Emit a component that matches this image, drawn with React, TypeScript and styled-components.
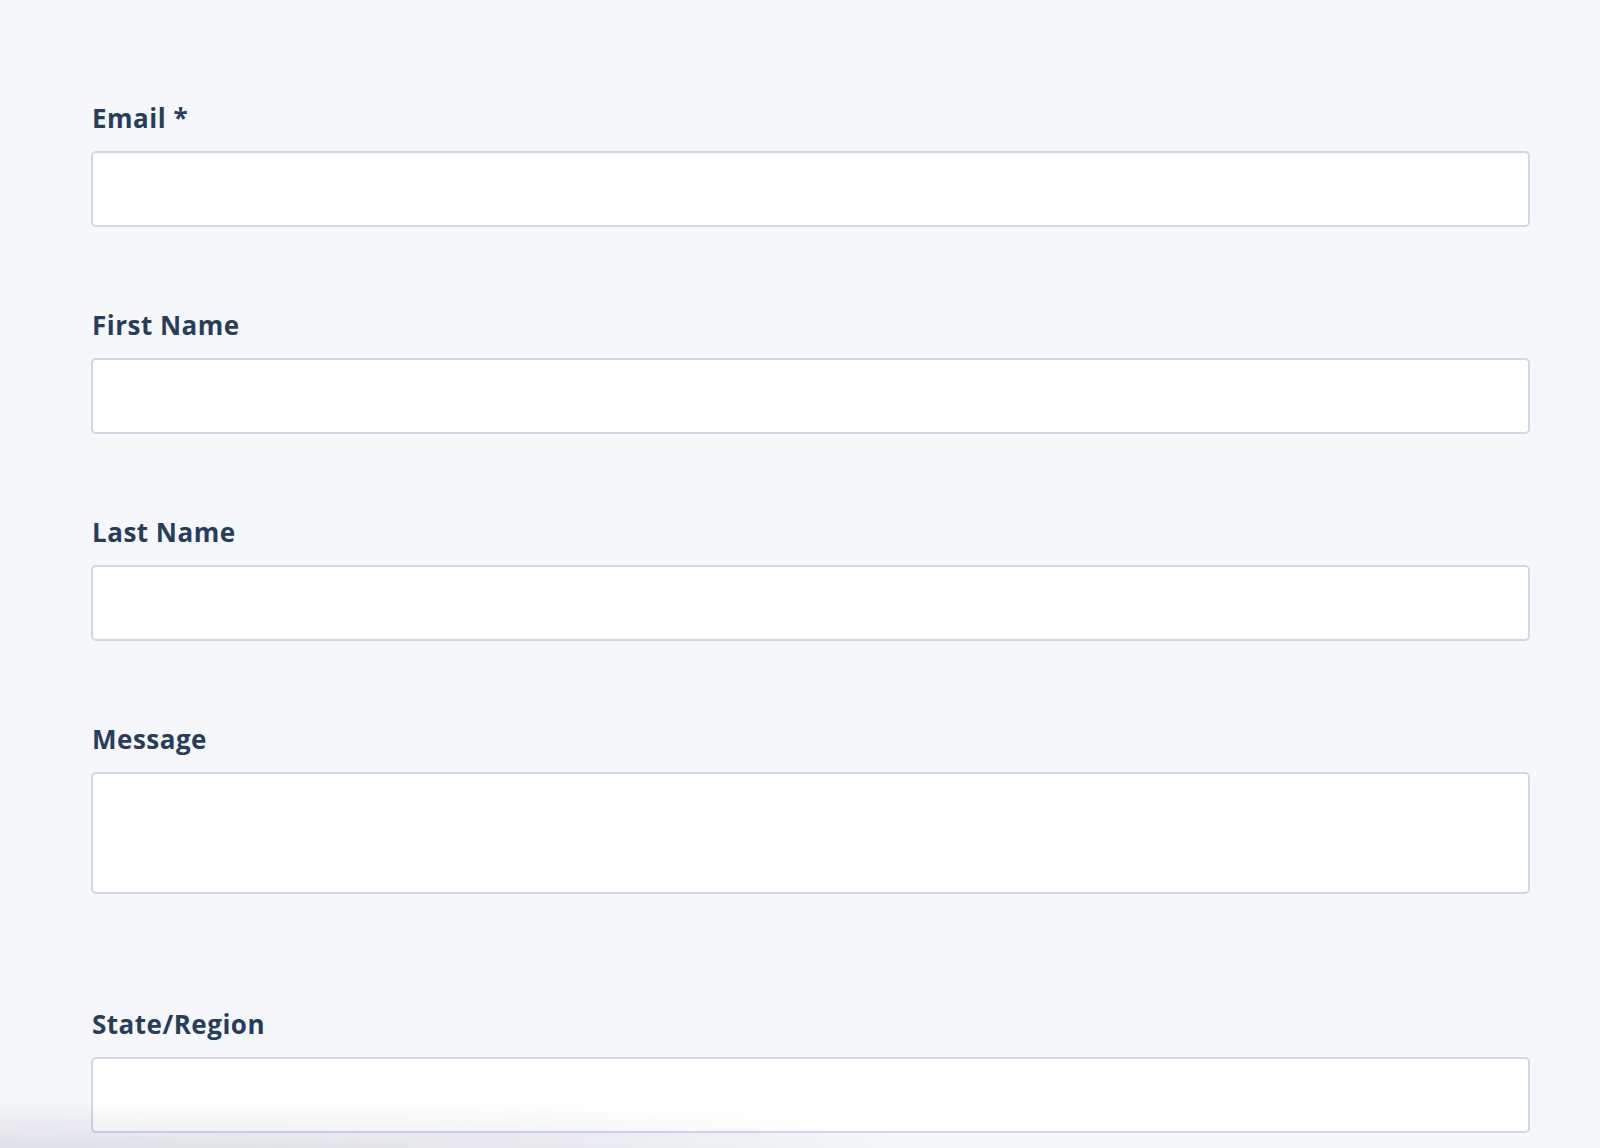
import React from "react";
import styled, { createGlobalStyle } from "styled-components";

const GlobalStyle = createGlobalStyle`
  html, body {
    margin: 0;
    padding: 0;
    background: #f6f7fb;
  }
  * { box-sizing: border-box; }
`;

const Page = styled.div`
  height: 1148px;
  overflow: hidden;
  padding: 102px 70px 0 91px;
  font-family: "Open Sans", Lato, "Liberation Sans", sans-serif;
`;

const Form = styled.form`
  display: flex;
  flex-direction: column;
  width: 1439px;
`;

const Field = styled.div<{ $after?: number }>`
  display: flex;
  flex-direction: column;
  gap: 17px;
  margin-bottom: ${(p) => p.$after ?? 82}px;
`;

const Label = styled.label`
  display: block;
  padding-left: 1px;
  font-size: 26px;
  line-height: 32px;
  font-weight: 700;
  color: #283d5a;
  letter-spacing: 0.5px;
`;

const inputBase = `
  width: 100%;
  background: #ffffff;
  border: 2px solid #cfd8e7;
  border-radius: 5px;
  outline: none;
  font: inherit;
  font-size: 20px;
  color: #283d5a;
  padding: 0 16px;
`;

const Input = styled.input`
  ${inputBase}
  height: 76px;
`;

const TextArea = styled.textarea`
  ${inputBase}
  height: 122px;
  resize: none;
  padding-top: 14px;
`;

/* soft shading along the lower-left edge of the viewport */
const Shade = styled.div`
  position: fixed;
  left: 0;
  bottom: 0;
  width: 1000px;
  height: 48px;
  pointer-events: none;
  background: linear-gradient(
    to right,
    rgba(120, 124, 140, 0.18) 0%,
    rgba(120, 124, 140, 0.13) 50%,
    rgba(120, 124, 140, 0) 92%
  );
  -webkit-mask-image: linear-gradient(to bottom, transparent 0%, #000 100%);
  mask-image: linear-gradient(to bottom, transparent 0%, #000 100%);
`;

const fields = [
  { id: "email", label: "Email *", type: "email" },
  { id: "firstname", label: "First Name", type: "text" },
  { id: "lastname", label: "Last Name", type: "text" },
  { id: "message", label: "Message", type: "textarea" },
  { id: "state", label: "State/Region", type: "text" },
];

export default function App() {
  return (
    <>
      <GlobalStyle />
      <Page>
        <Form onSubmit={(e) => e.preventDefault()}>
          {fields.map((f) => (
            <Field key={f.id} $after={f.type === "textarea" ? 114 : 82}>
              <Label htmlFor={f.id}>{f.label}</Label>
              {f.type === "textarea" ? (
                <TextArea id={f.id} />
              ) : (
                <Input id={f.id} type={f.type} />
              )}
            </Field>
          ))}
        </Form>
      </Page>
      <Shade />
    </>
  );
}
